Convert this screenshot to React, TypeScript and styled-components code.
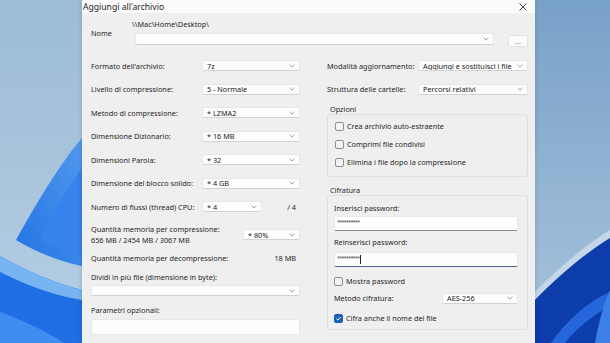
import styled, { createGlobalStyle } from 'styled-components';

const GlobalStyle = createGlobalStyle`
  html, body {
    margin: 0;
    padding: 0;
  }
  body {
    width: 610px;
    height: 343px;
    overflow: hidden;
    font-family: 'Noto Sans', 'Liberation Sans', sans-serif;
  }
`;

const Page = styled.div`
  display: grid;
  grid-template-columns: 82px 453px 1fr;
  width: 610px;
  height: 343px;
  overflow: hidden;
`;

const Wall = styled.div`
  height: 343px;
  overflow: hidden;

  svg {
    display: block;
  }
`;

const Dialog = styled.div`
  display: flex;
  flex-direction: column;
  background: #efefef;
  box-shadow: 0 0 5px rgba(0, 0, 0, 0.16);
  position: relative;
  z-index: 1;
`;

const TitleBar = styled.div`
  height: 13px;
  flex: none;
  display: flex;
  align-items: center;
  justify-content: space-between;
  padding: 0 8px 0 1px;
  background: #fbfbfb;
  font-size: 8.6px;
  color: #1c1c1c;
`;

const Body = styled.div`
  flex: 1;
  padding: 6px 7px 0 9px;
  font-size: 7.3px;
  color: #1f1f1f;
`;

const NameRow = styled.div`
  display: grid;
  grid-template-columns: 30px 1fr 20px;
  grid-template-rows: 10px 12px;
  column-gap: 14px;
  row-gap: 4px;
  align-items: center;
`;

const NameLabel = styled.span`
  grid-row: 1 / 3;
  padding-top: 2px;
`;

const PathText = styled.span`
  grid-column: 2 / 4;
  line-height: 10px;
  margin-left: -3px;
`;

const BrowseButton = styled.div`
  align-self: start;
  height: 12px;
  margin-top: 2px;
  box-sizing: border-box;
  border: 1px solid #e2e2e2;
  border-radius: 2px;
  background: #fbfbfb;
  color: #8a8a8a;
  font-size: 7px;
  line-height: 12px;
  text-align: center;
`;

const Columns = styled.div`
  display: grid;
  grid-template-columns: 209px 201px;
  column-gap: 27px;
  margin-top: 9px;
  align-items: start;
`;

const Col = styled.div`
  display: flex;
  flex-direction: column;
`;

const FieldRow = styled.div<{ $cols: string; $height?: number }>`
  display: grid;
  grid-template-columns: ${(p) => p.$cols};
  align-items: center;
  height: ${(p) => p.$height ?? 23.5}px;
`;

const Combo = styled.div<{ $height?: number }>`
  display: flex;
  align-items: center;
  justify-content: space-between;
  gap: 2px;
  box-sizing: border-box;
  height: ${(p) => p.$height ?? 11}px;
  padding: 0 4px 0 4px;
  background: #fdfdfd;
  border: 1px solid #e6e6e6;
  border-bottom-color: #d2d2d2;
  border-radius: 2px;
  color: #1a1a1a;
  white-space: nowrap;
  overflow: hidden;

  svg {
    flex: none;
  }
`;

const MemLabel = styled.div`
  line-height: 11px;
`;

const MemRow = styled(FieldRow)`
  padding-top: 5px;
  box-sizing: border-box;
`;

const Value = styled.span`
  text-align: right;
  padding-right: 4px;
`;

const Caption = styled.div<{ $gap: number }>`
  line-height: 11px;
  margin-top: ${(p) => p.$gap}px;
`;

const WideCombo = styled(Combo)<{ $gap: number }>`
  margin-top: ${(p) => p.$gap}px;
`;

const TextBox = styled.div<{ $gap: number }>`
  height: 16px;
  margin-top: ${(p) => p.$gap}px;
  background: #fdfdfd;
  border: 1px solid #e8e8e8;
  border-radius: 2px;
  box-sizing: border-box;
`;

const GroupTitle = styled.div<{ $gap: number }>`
  line-height: 10px;
  margin-top: ${(p) => p.$gap}px;
  padding-left: 3px;
`;

const Panel = styled.div<{ $pad: string }>`
  border: 1px solid #e0e0e0;
  border-radius: 3px;
  padding: ${(p) => p.$pad};
  display: flex;
  flex-direction: column;
`;

const CheckRow = styled.div<{ $height: number; $gap?: number }>`
  display: flex;
  align-items: center;
  gap: 3px;
  height: ${(p) => p.$height}px;
  margin-top: ${(p) => p.$gap ?? 0}px;
`;

const Box = styled.span<{ $checked?: boolean }>`
  display: flex;
  align-items: center;
  justify-content: center;
  width: 9px;
  height: 9px;
  box-sizing: border-box;
  border-radius: 2px;
  border: 1px solid ${(p) => (p.$checked ? '#1a5fb8' : '#8e8e8e')};
  background: ${(p) => (p.$checked ? '#1a5fb8' : '#f4f4f4')};
`;

const PassBox = styled.div<{ $gap: number; $focused?: boolean }>`
  height: 15px;
  margin-top: ${(p) => p.$gap}px;
  box-sizing: border-box;
  padding: 2px 0 0 2px;
  background: #fdfdfd;
  border: 1px solid #e8e8e8;
  border-bottom: ${(p) => (p.$focused ? '1.5px solid #4c6890' : '1px solid #8d8d8d')};
  border-radius: 2px;
  display: flex;
  align-items: flex-start;
`;

const Stars = styled.span`
  font-size: 5.5px;
  line-height: 7px;
  letter-spacing: -0.8px;
  color: #444;
`;

const Caret = styled.span`
  width: 0;
  height: 9px;
  border-left: 1px solid #222;
  margin-left: 1px;
`;

const Chevron = () => (
  <svg width="6" height="4" viewBox="0 0 6 4">
    <path d="M0.6 0.8 L3 3.1 L5.4 0.8" fill="none" stroke="#8c8c8c" strokeWidth="0.8" />
  </svg>
);

const Tick = () => (
  <svg width="7" height="7" viewBox="0 0 7 7">
    <path d="M1.3 3.6 L2.9 5.1 L5.8 1.9" fill="none" stroke="#ffffff" strokeWidth="1" />
  </svg>
);

const CloseIcon = () => (
  <svg width="8" height="8" viewBox="0 0 8 8">
    <path d="M0.5 0.5 L7.5 7.5 M7.5 0.5 L0.5 7.5" stroke="#2a2a2a" strokeWidth="0.9" />
  </svg>
);

const LeftWallpaper = () => (
  <svg width="82" height="343" viewBox="0 0 82 343">
    <defs>
      <linearGradient id="lsky" x1="0" y1="0" x2="0" y2="1">
        <stop offset="0" stopColor="#9ebcd6" />
        <stop offset="0.6" stopColor="#abc6dd" />
        <stop offset="1" stopColor="#b6d0e6" />
      </linearGradient>
      <linearGradient id="lpetal" x1="1" y1="0" x2="0" y2="1">
        <stop offset="0" stopColor="#5198ee" />
        <stop offset="1" stopColor="#2274e4" />
      </linearGradient>
    </defs>
    <rect width="82" height="343" fill="url(#lsky)" />
    <path d="M82 138 C66 156 40 196 16 240 C40 254 62 262 82 266 Z" fill="url(#lpetal)" />
    <path d="M82 168 C68 186 54 212 40 240 C54 248 68 253 82 256 Z" fill="#3583ec" />
    <path d="M0 256 C28 272 58 284 82 290 L82 343 L0 343 Z" fill="#1e6fe3" />
    <path d="M0 256 C28 272 58 284 82 290 L82 300 C56 296 28 286 0 272 Z" fill="#78b4f2" />
    <path d="M0 312 C22 320 44 330 64 343 L0 343 Z" fill="#3f8df0" />
  </svg>
);

const RightWallpaper = () => (
  <svg width="75" height="343" viewBox="0 0 75 343">
    <defs>
      <linearGradient id="rsky" x1="0" y1="0" x2="0" y2="1">
        <stop offset="0" stopColor="#78a1c8" />
        <stop offset="0.6" stopColor="#96b6d4" />
        <stop offset="1" stopColor="#a8c4dd" />
      </linearGradient>
    </defs>
    <rect width="75" height="343" fill="url(#rsky)" />
    <path d="M75 230 C55 242 25 266 0 292 L0 300 C25 274 55 250 75 238 Z" fill="#c4d7e9" />
    <path d="M75 238 C55 250 25 274 0 300 L0 343 L75 343 Z" fill="#0c3dab" />
    <path d="M16 343 C32 320 52 302 75 292 L75 306 C56 316 40 330 30 343 Z" fill="#2566dc" />
    <path d="M60 343 C64 320 70 300 75 290 L75 343 Z" fill="#3c7fe8" />
  </svg>
);

export default function App() {
  return (
    <>
      <GlobalStyle />
      <Page>
        <Wall>
          <LeftWallpaper />
        </Wall>
        <Dialog>
          <TitleBar>
            <span>Aggiungi all'archivio</span>
            <CloseIcon />
          </TitleBar>
          <Body>
            <NameRow>
              <NameLabel>Nome</NameLabel>
              <PathText>\\Mac\Home\Desktop\</PathText>
              <Combo $height={12}>
                <span />
                <Chevron />
              </Combo>
              <BrowseButton>...</BrowseButton>
            </NameRow>
            <Columns>
              <Col>
                <FieldRow $cols="111px 98px">
                  <span>Formato dell'archivio:</span>
                  <Combo>
                    <span>7z</span>
                    <Chevron />
                  </Combo>
                </FieldRow>
                <FieldRow $cols="111px 98px">
                  <span>Livello di compressione:</span>
                  <Combo>
                    <span>5 - Normale</span>
                    <Chevron />
                  </Combo>
                </FieldRow>
                <FieldRow $cols="111px 98px">
                  <span>Metodo di compressione:</span>
                  <Combo>
                    <span>* LZMA2</span>
                    <Chevron />
                  </Combo>
                </FieldRow>
                <FieldRow $cols="111px 98px">
                  <span>Dimensione Dizionario:</span>
                  <Combo>
                    <span>* 16 MB</span>
                    <Chevron />
                  </Combo>
                </FieldRow>
                <FieldRow $cols="111px 98px">
                  <span>Dimensioni Parola:</span>
                  <Combo>
                    <span>* 32</span>
                    <Chevron />
                  </Combo>
                </FieldRow>
                <FieldRow $cols="111px 98px">
                  <span>Dimensione del blocco solido:</span>
                  <Combo>
                    <span>* 4 GB</span>
                    <Chevron />
                  </Combo>
                </FieldRow>
                <FieldRow $cols="111px 60px 1fr">
                  <span>Numero di flussi (thread) CPU:</span>
                  <Combo>
                    <span>* 4</span>
                    <Chevron />
                  </Combo>
                  <Value>/ 4</Value>
                </FieldRow>
                <MemRow $cols="1fr 57px" $height={27}>
                  <MemLabel>
                    Quantità memoria per compressione:
                    <br />
                    656 MB / 2454 MB / 3067 MB
                  </MemLabel>
                  <Combo>
                    <span>* 80%</span>
                    <Chevron />
                  </Combo>
                </MemRow>
                <FieldRow $cols="1fr auto" $height={25}>
                  <span>Quantità memoria per decompressione:</span>
                  <Value>18 MB</Value>
                </FieldRow>
                <Caption $gap={1}>Dividi in più file (dimensione in byte):</Caption>
                <WideCombo $gap={2.5}>
                  <span />
                  <Chevron />
                </WideCombo>
                <Caption $gap={8.5}>Parametri opzionali:</Caption>
                <TextBox $gap={3.5} />
              </Col>
              <Col>
                <FieldRow $cols="91px 110px">
                  <span>Modalità aggiornamento:</span>
                  <Combo>
                    <span>Aggiungi e sostituisci i file</span>
                    <Chevron />
                  </Combo>
                </FieldRow>
                <FieldRow $cols="91px 110px">
                  <span>Struttura delle cartelle:</span>
                  <Combo>
                    <span>Percorsi relativi</span>
                    <Chevron />
                  </Combo>
                </FieldRow>
                <GroupTitle $gap={3}>Opzioni</GroupTitle>
                <Panel $pad="2px 9px 5px 7px">
                  <CheckRow $height={18}>
                    <Box />
                    <span>Crea archivio auto-estraente</span>
                  </CheckRow>
                  <CheckRow $height={18}>
                    <Box />
                    <span>Comprimi file condivisi</span>
                  </CheckRow>
                  <CheckRow $height={18}>
                    <Box />
                    <span>Elimina i file dopo la compressione</span>
                  </CheckRow>
                </Panel>
                <GroupTitle $gap={8}>Cifratura</GroupTitle>
                <Panel $pad="6.5px 9px 4px 6px">
                  <Caption $gap={0}>Inserisci password:</Caption>
                  <PassBox $gap={2.5}>
                    <Stars>**********</Stars>
                  </PassBox>
                  <Caption $gap={5.5}>Reinserisci password:</Caption>
                  <PassBox $gap={4.5} $focused>
                    <Stars>**********</Stars>
                    <Caret />
                  </PassBox>
                  <CheckRow $height={14} $gap={7}>
                    <Box />
                    <span>Mostra password</span>
                  </CheckRow>
                  <FieldRow $cols="1fr 76px" $height={14} style={{ marginTop: 3 }}>
                    <span>Metodo cifratura:</span>
                    <Combo>
                      <span>AES-256</span>
                      <Chevron />
                    </Combo>
                  </FieldRow>
                  <CheckRow $height={14} $gap={6}>
                    <Box $checked>
                      <Tick />
                    </Box>
                    <span>Cifra anche il nome dei file</span>
                  </CheckRow>
                </Panel>
              </Col>
            </Columns>
          </Body>
        </Dialog>
        <Wall>
          <RightWallpaper />
        </Wall>
      </Page>
    </>
  );
}
